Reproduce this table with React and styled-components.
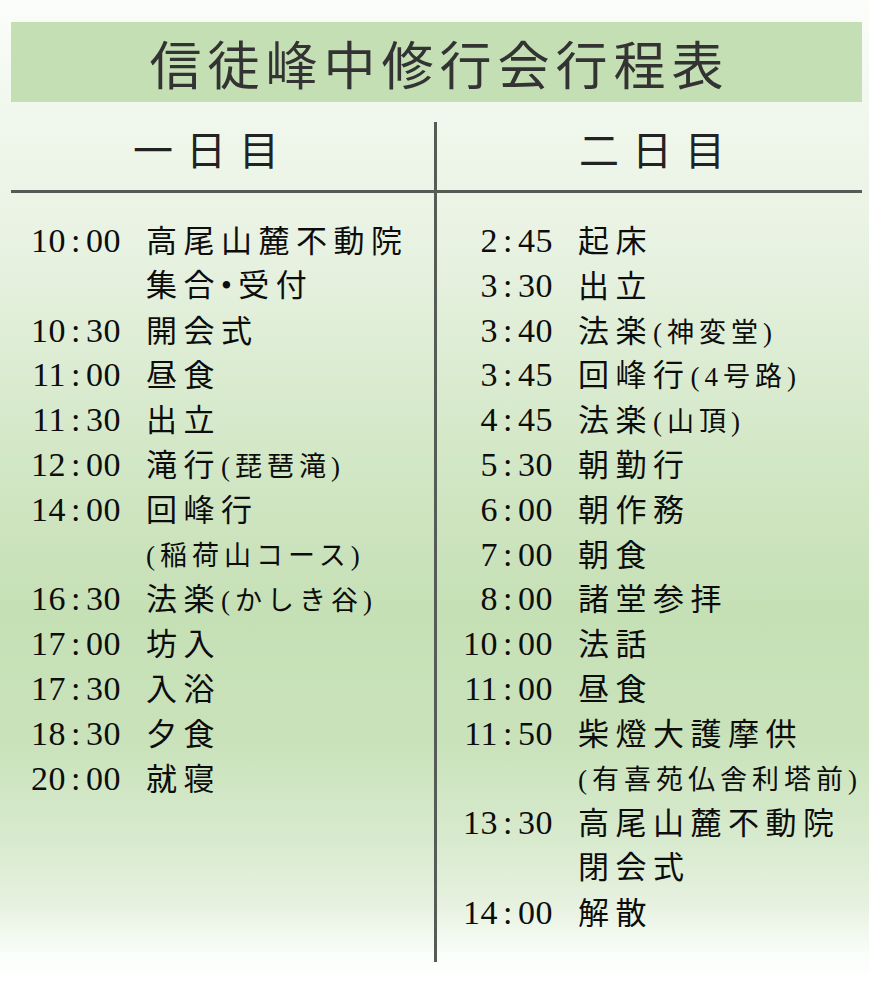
import styled, { createGlobalStyle } from "styled-components";

const GlobalStyle = createGlobalStyle`
  html, body {
    margin: 0;
    padding: 0;
    background: #ffffff;
  }
  body {
    font-family: "Liberation Serif", "Noto Sans CJK JP", serif;
    color: #0d0d0d;
  }
`;

const INK = "#555b55";

const Page = styled.div`
  width: 869px;
  height: 983px;
  box-sizing: border-box;
  padding: 22px 7px 0 11px;
  background: linear-gradient(
    to bottom,
    #fbfdfa 0%,
    #f0f7ec 12%,
    #e8f2e2 25%,
    #d4e8c8 45%,
    #c6e0b6 62%,
    #c9e2ba 75%,
    #d7eacd 85%,
    #e6f1df 92%,
    #fafdf9 97%,
    #ffffff 100%
  );
`;

const TitleBar = styled.h1`
  margin: 0;
  height: 80px;
  box-sizing: border-box;
  padding: 2px 0 0 6px;
  display: flex;
  align-items: center;
  justify-content: center;
  background: #c5dfb5;
  font-family: "Noto Sans CJK JP", sans-serif;
  font-weight: 400;
  font-size: 52px;
  line-height: 1;
  letter-spacing: 6px;
  color: #333;
`;

const Board = styled.div`
  display: grid;
  grid-template-columns: 423px 3px 425px;
  grid-template-rows: 88px 3px auto;
`;

const Divider = styled.div`
  grid-column: 2;
  grid-row: 1 / span 3;
  margin-top: 20px;
  height: 840px;
  background: ${INK};
`;

const DayHeader = styled.div`
  grid-row: 1;
  grid-column: ${(p) => p.$col};
  display: flex;
  align-items: center;
  box-sizing: border-box;
  padding: 4px 0 0 ${(p) => p.$pad}px;
  font-family: "Noto Sans CJK JP", sans-serif;
  font-size: 40px;
  line-height: 1;
  letter-spacing: 13px;
  color: #222;
`;

const Rule = styled.div`
  grid-row: 2;
  grid-column: ${(p) => p.$col};
  background: ${INK};
`;

const Schedule = styled.div`
  grid-row: 3;
  grid-column: ${(p) => p.$col};
  padding: 26px 0 0 ${(p) => p.$pad}px;
`;

const Line = styled.div`
  display: grid;
  grid-template-columns: 92px auto;
  column-gap: 25px;
  align-items: baseline;
  height: 44.8px;
  line-height: 44.8px;
  white-space: nowrap;
`;

const Time = styled.span`
  text-align: right;
  font-family: "Liberation Serif", serif;
  font-size: 34px;
  letter-spacing: 0.5px;
`;

const Colon = styled.span`
  margin: 0 5px;
`;

const Item = styled.span`
  font-size: 31px;
  letter-spacing: 6.5px;
`;

const Note = styled.span`
  font-size: 27px;
  letter-spacing: 5px;
`;

const day1 = [
  ["10:00", "高尾山麓不動院"],
  ["", "集合•受付"],
  ["10:30", "開会式"],
  ["11:00", "昼食"],
  ["11:30", "出立"],
  ["12:00", "滝行", "(琵琶滝)"],
  ["14:00", "回峰行"],
  ["", "", "(稲荷山コース)"],
  ["16:30", "法楽", "(かしき谷)"],
  ["17:00", "坊入"],
  ["17:30", "入浴"],
  ["18:30", "夕食"],
  ["20:00", "就寝"],
];

const day2 = [
  ["2:45", "起床"],
  ["3:30", "出立"],
  ["3:40", "法楽", "(神変堂)"],
  ["3:45", "回峰行", "(4号路)"],
  ["4:45", "法楽", "(山頂)"],
  ["5:30", "朝勤行"],
  ["6:00", "朝作務"],
  ["7:00", "朝食"],
  ["8:00", "諸堂参拝"],
  ["10:00", "法話"],
  ["11:00", "昼食"],
  ["11:50", "柴燈大護摩供"],
  ["", "", "(有喜苑仏舎利塔前)"],
  ["13:30", "高尾山麓不動院"],
  ["", "閉会式"],
  ["14:00", "解散"],
];

function TimeText({ value }) {
  if (!value) return <Time />;
  const [h, m] = value.split(":");
  return (
    <Time>
      {h}
      <Colon>:</Colon>
      {m}
    </Time>
  );
}

function DayList({ rows, col, pad }) {
  return (
    <Schedule $col={col} $pad={pad}>
      {rows.map(([time, text, note], i) => (
        <Line key={i}>
          <TimeText value={time} />
          <Item>
            {text}
            {note && <Note>{note}</Note>}
          </Item>
        </Line>
      ))}
    </Schedule>
  );
}

export default function App() {
  return (
    <>
      <GlobalStyle />
      <Page>
        <TitleBar>信徒峰中修行会行程表</TitleBar>
        <Board>
          <DayHeader $col={1} $pad={122}>
            一日目
          </DayHeader>
          <DayHeader $col={3} $pad={142}>
            二日目
          </DayHeader>
          <Divider />
          <Rule $col={1} />
          <Rule $col={3} />
          <DayList rows={day1} col={1} pad={18} />
          <DayList rows={day2} col={3} pad={24} />
        </Board>
      </Page>
    </>
  );
}
